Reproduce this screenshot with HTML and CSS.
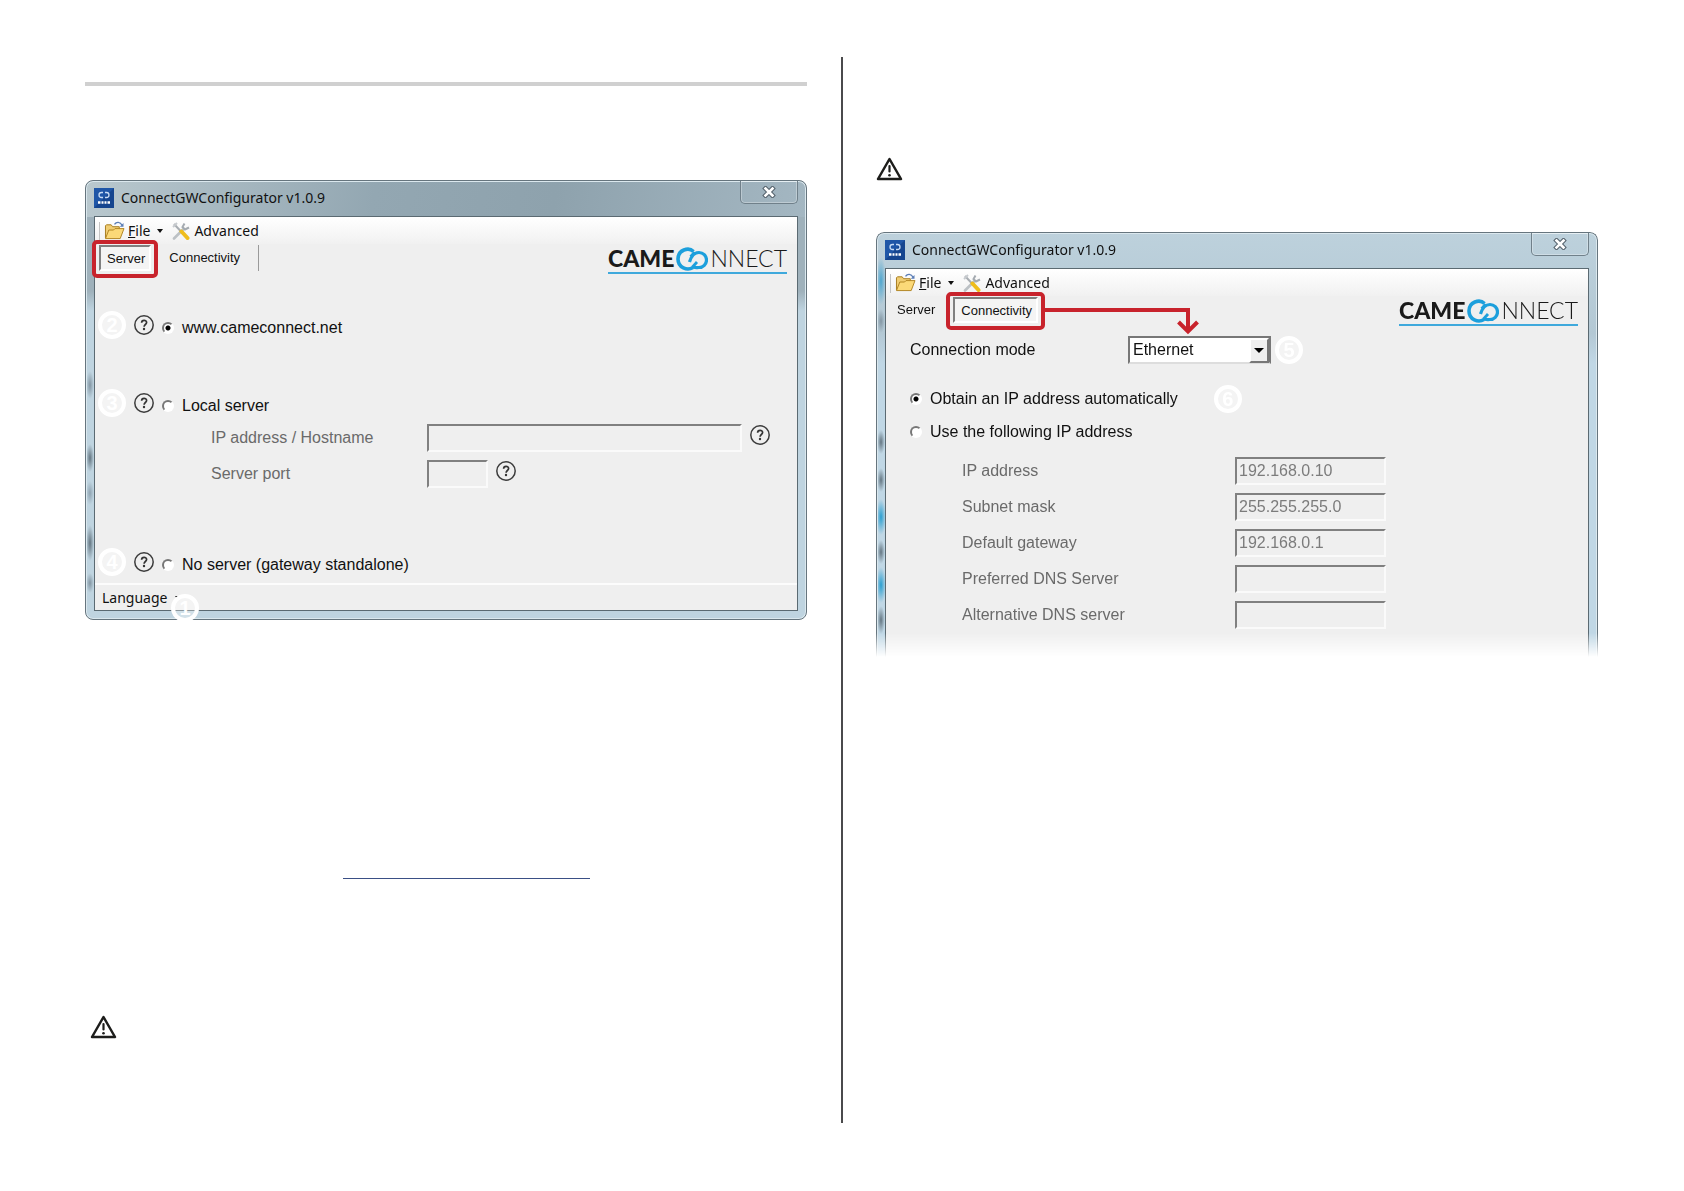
FILE: index.html
```html
<!DOCTYPE html>
<html lang="en">

<head>
    <meta charset="UTF-8">
    <meta name="viewport" content="width=device-width, initial-scale=1.0">
    <title>ConnectGWConfigurator</title>
    <link rel="stylesheet" href="styles.css">
</head>

<body>
    <!-- shared icons -->
    <svg class="defs" aria-hidden="true">
        <symbol id="icon-app" viewBox="0 0 20 20">
            <rect width="20" height="20" fill="#15458f" />
            <path d="M0 0h20L0 20z" fill="#2763b8" opacity=".6" />
            <path d="M9 4.500H7.500a2.500 2.500 0 0 0 0 5H9M11 9.500h1.500a2.500 2.500 0 0 0 0-5H11" fill="none" stroke="#c8dcf5" stroke-width="1.300" />
            <path d="M4 14.500h2.500M7.500 14.500h2M10.500 14.500h2M13.500 14.500h2.500" stroke="#fff" stroke-width="2.400" />
        </symbol>
        <symbol id="icon-folder" viewBox="0 0 22 20">
            <path d="M1.500 18V5l1-1h5l1.500 2h7v5" fill="#f0cd72" stroke="#a57a1c" />
            <path d="M1.500 18.500L5 9.500h5l1.500-1.500h9.500l-4 10.500z" fill="#fbd978" stroke="#b08320" />
            <path d="M11 3.500c2-3 6-3 8 1" fill="none" stroke="#5a7db5" stroke-width="1.400" />
            <path d="M20.500 2v4h-4z" fill="#5a7db5" />
        </symbol>
        <symbol id="icon-tools" viewBox="0 0 18 18">
            <path d="M2 16.500L11 7.500" stroke="#bcc1c5" stroke-width="2.600" stroke-linecap="round" />
            <path d="M12.500 1.500l-2 3.500 2.500 2.500 4-2" fill="none" stroke="#a4aab0" stroke-width="2" />
            <path d="M2 2l7 7.500" stroke="#a8adb2" stroke-width="2" />
            <path d="M1 5l4-4" stroke="#c6cace" stroke-width="2" />
            <path d="M9.500 9.500l6 6.500" stroke="#efbd1c" stroke-width="4" stroke-linecap="round" />
        </symbol>
        <symbol id="icon-help" viewBox="0 0 20 20">
            <circle cx="10" cy="10" r="9.200" fill="none" stroke="#3c3c3c" stroke-width="1.500" />
            <path d="M7.600 7.800c0-3.400 5-3.200 5-.3 0 2-2.500 2-2.500 4.200" fill="none" stroke="#333" stroke-width="1.700" />
            <circle cx="10" cy="14" r="1.200" fill="#333" />
        </symbol>
        <symbol id="icon-warning" viewBox="0 0 27 24">
            <path d="M13.500 2L25 22H2z" fill="none" stroke="#1d1d1b" stroke-width="2.500" stroke-linejoin="round" />
            <path d="M13.500 9v5.500" stroke="#1d1d1b" stroke-width="2.200" stroke-linecap="round" />
            <circle cx="13.500" cy="18.300" r="1.300" fill="#1d1d1b" />
        </symbol>
        <symbol id="icon-close" viewBox="0 0 14 12">
            <path d="M3.500 2.500l7 7M10.500 2.500l-7 7" stroke="#55626c" stroke-width="4.600" stroke-linecap="square" />
            <path d="M3.500 2.500l7 7M10.500 2.500l-7 7" stroke="#fff" stroke-width="2.600" stroke-linecap="square" />
        </symbol>
        <!-- two open rings hooked into each other -->
        <symbol id="icon-clouds" viewBox="0 0 32 24">
            <path d="M17.500 4.500C12.500-.5 2 3 2 12s9.500 12 15 8.500" fill="none" stroke="#1c9fdc" stroke-width="3.600" />
            <path d="M18.500 5l-4 4.500" stroke="#1c9fdc" stroke-width="2.600" />
            <path d="M13.500 15c1.500-5 4-9.500 9.500-9.500a7.400 7.400 0 0 1 0 15c-3 0-5 .5-7-1" fill="none" stroke="#1c9fdc" stroke-width="3.200" />
            <path d="M16.500 20l4.500-5" stroke="#1c9fdc" stroke-width="2.800" />
        </symbol>
    </svg>

    <main class="spread">
        <section class="page page-left">
            <hr class="rule">

            <div class="window window-dark">
                <header class="titlebar">
                    <svg class="app-icon"><use href="#icon-app" /></svg>
                    <span class="title">ConnectGWConfigurator v1.0.9</span>
                    <button class="close" aria-label="Close"><svg><use href="#icon-close" /></svg></button>
                </header>
                <div class="client">
                    <div class="toolbar">
                        <button class="tool file"><svg class="folder"><use href="#icon-folder" /></svg><span><u>F</u>ile</span><i class="caret"></i></button>
                        <button class="tool"><svg class="tools"><use href="#icon-tools" /></svg>Advanced</button>
                    </div>
                    <div class="tabbar">
                        <nav class="tabs">
                            <button class="tab active">Server</button>
                            <button class="tab">Connectivity</button>
                            <span class="separator"></span>
                        </nav>
                        <div class="logo"><b>CAME</b><svg><use href="#icon-clouds" /></svg><span>NNECT</span></div>
                    </div>
                    <div class="panel server-panel">
                        <div class="option">
                            <span class="badge">2</span>
                            <svg class="help"><use href="#icon-help" /></svg>
                            <label class="choice"><input type="radio" name="server" checked>www.cameconnect.net</label>
                        </div>
                        <div class="option local">
                            <span class="badge">3</span>
                            <svg class="help"><use href="#icon-help" /></svg>
                            <label class="choice"><input type="radio" name="server">Local server</label>
                        </div>
                        <div class="fields">
                            <div class="field">
                                <label for="host">IP address / Hostname</label>
                                <input type="text" id="host" class="wide" disabled>
                                <svg class="help"><use href="#icon-help" /></svg>
                            </div>
                            <div class="field">
                                <label for="port">Server port</label>
                                <input type="text" id="port" class="short" disabled>
                                <svg class="help"><use href="#icon-help" /></svg>
                            </div>
                        </div>
                        <div class="option standalone">
                            <span class="badge">4</span>
                            <svg class="help"><use href="#icon-help" /></svg>
                            <label class="choice"><input type="radio" name="server">No server (gateway standalone)</label>
                        </div>
                    </div>
                    <footer class="status">
                        <button class="tool language">Language<i class="caret"></i></button>
                        <span class="badge">1</span>
                    </footer>
                </div>
            </div>

            <div class="link-line"></div>
            <svg class="warning"><use href="#icon-warning" /></svg>
        </section>

        <section class="page page-right">
            <svg class="warning"><use href="#icon-warning" /></svg>

            <div class="window window-faded">
                <header class="titlebar">
                    <svg class="app-icon"><use href="#icon-app" /></svg>
                    <span class="title">ConnectGWConfigurator v1.0.9</span>
                    <button class="close" aria-label="Close"><svg><use href="#icon-close" /></svg></button>
                </header>
                <div class="client">
                    <div class="toolbar">
                        <button class="tool file"><svg class="folder"><use href="#icon-folder" /></svg><span><u>F</u>ile</span><i class="caret"></i></button>
                        <button class="tool"><svg class="tools"><use href="#icon-tools" /></svg>Advanced</button>
                    </div>
                    <div class="tabbar">
                        <nav class="tabs">
                            <button class="tab">Server</button>
                            <button class="tab active">Connectivity</button>
                            <svg class="arrow" viewBox="0 0 156 28">
                                <path d="M0 2h144v20" fill="none" stroke="#c8232c" stroke-width="4" />
                                <path d="M134.500 14l9.500 9.500 9.500-9.500" fill="none" stroke="#c8232c" stroke-width="4" />
                            </svg>
                        </nav>
                        <div class="logo"><b>CAME</b><svg><use href="#icon-clouds" /></svg><span>NNECT</span></div>
                    </div>
                    <div class="panel network-panel">
                        <div class="mode">
                            <label for="mode">Connection mode</label>
                            <span class="select">
                                <select id="mode">
                                    <option>Ethernet</option>
                                </select>
                                <i class="drop"></i>
                            </span>
                            <span class="badge">5</span>
                        </div>
                        <div class="option">
                            <label class="choice"><input type="radio" name="ip" checked>Obtain an IP address automatically</label>
                            <span class="badge auto">6</span>
                        </div>
                        <div class="option">
                            <label class="choice"><input type="radio" name="ip">Use the following IP address</label>
                        </div>
                        <div class="fields">
                            <div class="field">
                                <label for="ip">IP address</label>
                                <input type="text" id="ip" value="192.168.0.10" disabled>
                            </div>
                            <div class="field">
                                <label for="mask">Subnet mask</label>
                                <input type="text" id="mask" value="255.255.255.0" disabled>
                            </div>
                            <div class="field">
                                <label for="gateway">Default gateway</label>
                                <input type="text" id="gateway" value="192.168.0.1" disabled>
                            </div>
                            <div class="field">
                                <label for="dns1">Preferred DNS Server</label>
                                <input type="text" id="dns1" disabled>
                            </div>
                            <div class="field">
                                <label for="dns2">Alternative DNS server</label>
                                <input type="text" id="dns2" disabled>
                            </div>
                        </div>
                    </div>
                </div>
            </div>
        </section>
    </main>
</body>

</html>
```
FILE: styles.css
```css
* {
    box-sizing: border-box;
}

body {
    margin: 0;
    background: #fff;
    color: #111;
    font: 16px/20px "Liberation Sans", Arial, sans-serif;
}

button,
input,
select {
    margin: 0;
    padding: 0;
    border: 0;
    border-radius: 0;
    background: none;
    color: inherit;
    font: inherit;
}

svg {
    display: block;
    flex: none;
}

.defs {
    position: absolute;
    width: 0;
    height: 0;
}

.spread {
    display: grid;
    grid-template-columns: 1fr 1fr;
    min-height: 100vh;
    padding: 57px 83px 68px 85px;
}

.page-left {
    padding: 25px 34px 0 0;
    border-right: 2px solid #4a4a4c;
}

.page-right {
    padding: 100px 3px 0 33px;
}

.rule {
    height: 4px;
    margin: 0 0 94px;
    border: 0;
    background: #d0d0d0;
}

.link-line {
    width: 247px;
    height: 1px;
    margin: 258px 0 136px 258px;
    background: #3a4f85;
}

.warning {
    width: 27px;
    height: 24px;
}

.page-left .warning {
    margin-left: 5px;
}

/* window frame */
.window {
    padding: 0 8px 8px;
    border: 1px solid #66757e;
    border-radius: 8px;
    box-shadow: inset 0 0 0 1px #dbe8ee;
}

/* the smudges on the left edge are the desktop showing through the glass */
.window-dark {
    background:
        linear-gradient(100deg, #b9c8ce, #93a7b2 40%, #8ea2ad 65%, #a4b7c2) 0 0 / 100% 36px no-repeat,
        radial-gradient(4px 14px at 4px 204px, #8396a3, transparent) no-repeat,
        radial-gradient(4px 14px at 4px 277px, #647682, transparent) no-repeat,
        radial-gradient(4px 12px at 4px 312px, #8fa3b1, transparent) no-repeat,
        radial-gradient(4px 18px at 4px 362px, #647682, transparent) no-repeat,
        radial-gradient(4px 10px at 4px 402px, #8396a3, transparent) no-repeat,
        linear-gradient(#9fb1bb, #9fb1bb 110px, #bfd4e0 130px, #bfd4e0);
}

.window-faded {
    margin-top: 51px;
    padding-bottom: 0;
    border-bottom: 0;
    border-radius: 8px 8px 0 0;
    background:
        radial-gradient(5px 24px at 4px 48px, #4ea6cf, transparent) no-repeat,
        radial-gradient(4px 12px at 4px 88px, #8396a3, transparent) no-repeat,
        radial-gradient(4px 12px at 4px 209px, #647682, transparent) no-repeat,
        radial-gradient(4px 12px at 4px 247px, #647682, transparent) no-repeat,
        radial-gradient(5px 18px at 4px 284px, #2b9fd0, transparent) no-repeat,
        radial-gradient(4px 12px at 4px 319px, #647682, transparent) no-repeat,
        radial-gradient(5px 18px at 4px 352px, #2b9fd0, transparent) no-repeat,
        radial-gradient(4px 14px at 4px 387px, #647682, transparent) no-repeat,
        linear-gradient(#bdd1dc, #b3c8d4 100px, #c0d7e5 130px);
    -webkit-mask-image: linear-gradient(#000 calc(100% - 24px), transparent);
    mask-image: linear-gradient(#000 calc(100% - 24px), transparent);
}

.titlebar {
    display: flex;
    height: 35px;
}

.app-icon {
    width: 20px;
    height: 20px;
    margin-top: 7px;
}

.title {
    margin: 7px auto 0 7px;
    font: 14px/20px "Noto Sans", sans-serif;
}

.close {
    display: flex;
    align-items: center;
    justify-content: center;
    width: 58px;
    height: 23px;
    border: 1px solid #70808a;
    border-top: 0;
    border-radius: 0 0 5px 5px;
    box-shadow: inset 0 0 0 1px rgba(255, 255, 255, .3);
}

.close svg {
    width: 14px;
    height: 12px;
}

.client {
    border: 1px solid #5b6a72;
    background: #efefef;
}

.window-faded .client {
    border-bottom: 0;
}

/* toolbar */
.toolbar {
    display: flex;
    height: 27px;
    padding-left: 4px;
    background: linear-gradient(#fff, #f1f1f1);
}

.toolbar::before {
    content: "";
    width: 1px;
    margin: 5px 4px 3px 0;
    background: #c4c4c4;
}

.tool {
    display: flex;
    align-items: center;
    gap: 4px;
    font: 14px/20px "Noto Sans", sans-serif;
}

.file {
    gap: 3px;
    margin-right: 9px;
}

.folder {
    width: 21px;
    height: 19px;
}

.tools {
    width: 18px;
    height: 18px;
}

.caret {
    margin-left: 4px;
    border: 3px solid transparent;
    border-top: 4px solid #111;
    border-bottom: 0;
}

/* tabs */
.tabbar {
    display: flex;
    justify-content: space-between;
    height: 32px;
    padding: 1px 10px 0 4px;
}

.tabs {
    position: relative;
    display: flex;
    gap: 11px;
    height: 26px;
    font-size: 13px;
}

.tab {
    padding: 0 7px;
}

.active {
    position: relative;
    padding: 1px 4px 0 6px;
    border: 2px solid #808080;
    border-right: 2px solid #fff;
    border-bottom: 2px solid #fff;
    background: #f4f4f4;
}

.active::after {
    content: "";
    position: absolute;
    inset: -7px -9px -9px;
    border: 4px solid #c8232c;
    border-radius: 5px;
}

.separator {
    width: 1px;
    background: #9a9a9a;
}

.arrow {
    position: absolute;
    z-index: 1;
    top: 11px;
    left: 100%;
    width: 156px;
    height: 28px;
    margin-left: 6px;
}

.logo {
    display: flex;
    align-items: center;
    height: 29px;
    border-bottom: 2px solid #3fa9dc;
    color: #1a1a1a;
    font: 23px/27px Lato, sans-serif;
}

.logo b {
    font-weight: 900;
}

.logo span {
    font-weight: 300;
}

.logo svg {
    width: 32px;
    height: 24px;
    margin: 0 2px;
}

/* form rows */
.option {
    display: flex;
    align-items: center;
    gap: 8px;
    height: 28px;
}

.choice {
    display: flex;
    align-items: center;
    gap: 8px;
}

input[type="radio"] {
    appearance: none;
    width: 12px;
    height: 12px;
    border: 2px solid;
    border-color: #777 #fff #fff #777;
    border-radius: 50%;
    background: #fff;
}

input[type="radio"]:checked {
    background: radial-gradient(circle, #000 0 2px, #fff 3px);
}

.badge {
    display: flex;
    align-items: center;
    justify-content: center;
    width: 28px;
    height: 28px;
    border: 4px solid #fff;
    border-radius: 50%;
    background: rgba(255, 255, 255, .3);
    color: #fff;
    font-size: 20px;
    font-weight: bold;
}

.help {
    width: 20px;
    height: 20px;
    margin-bottom: 6px;
}

.fields {
    display: grid;
    gap: 8px;
    color: #6a6a6a;
}

.field {
    display: flex;
    align-items: center;
    gap: 8px;
}

.field input {
    width: 151px;
    height: 28px;
    padding-left: 2px;
    border: 2px solid;
    border-color: #808080 #fafafa #fafafa #808080;
    color: #7c7c7c;
}

.server-panel {
    padding: 38px 27px 4px 3px;
}

.server-panel .badge {
    margin-bottom: 6px;
}

.server-panel .fields {
    padding: 4px 0 0 113px;
}

.server-panel .field label {
    width: 208px;
}

.local {
    margin-top: 50px;
}

.standalone {
    margin-top: 63px;
}

.field .wide {
    flex: 1;
}

.field .short {
    width: 61px;
}

.status {
    position: relative;
    height: 27px;
    border-top: 2px solid #fcfcfc;
}

.language {
    height: 25px;
    padding-left: 7px;
}

.status .badge {
    position: absolute;
    top: 9px;
    left: 76px;
}

.network-panel {
    padding: 8px 24px 28px;
}

.mode {
    display: flex;
    align-items: center;
    gap: 4px;
    margin-bottom: 21px;
}

.mode label {
    width: 214px;
}

.select {
    position: relative;
    width: 143px;
}

.select select {
    appearance: none;
    display: block;
    width: 100%;
    height: 28px;
    padding-left: 3px;
    border: 2px solid #777;
    border-bottom-color: #ddd;
    background: #fff;
}

.drop {
    position: absolute;
    top: 2px;
    right: 2px;
    display: grid;
    place-items: center;
    width: 20px;
    height: 25px;
    border: 2px solid;
    border-color: #fff #777 #777 #fff;
    background: #efefef;
    pointer-events: none;
}

.drop::before {
    content: "";
    border: 5px solid transparent;
    border-top-color: #000;
    border-bottom: 0;
}

.network-panel .option + .option {
    margin-top: 5px;
}

.auto {
    margin-left: 28px;
}

.network-panel .fields {
    padding: 11px 0 0 52px;
}

.network-panel .field label {
    width: 265px;
}
```
